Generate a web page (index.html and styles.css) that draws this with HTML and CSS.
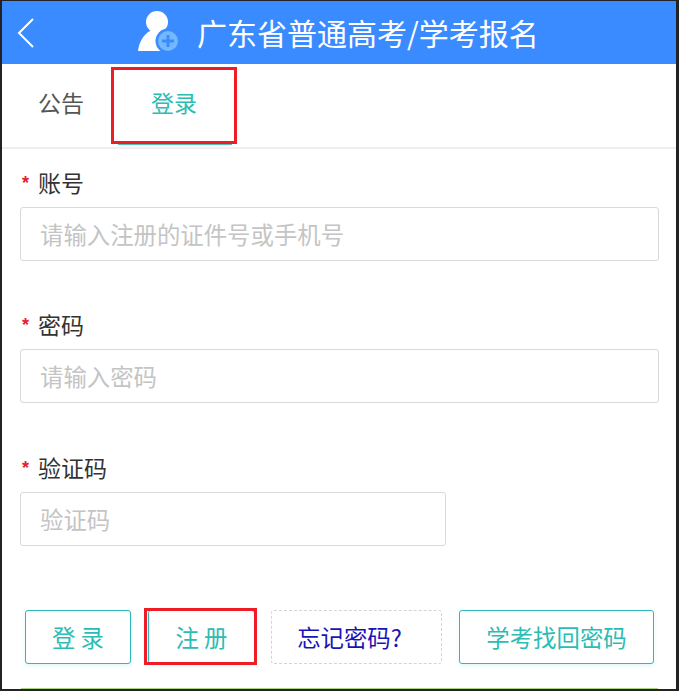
FILE: index.html
```html
<!DOCTYPE html>
<html lang="zh-CN">
<head>
    <meta charset="UTF-8">
    <meta name="viewport" content="width=device-width, initial-scale=1.0">
    <title>广东省普通高考/学考报名</title>
    <link rel="stylesheet" href="styles.css">
</head>
<body>
<div class="screen">
    <header class="topbar">
        <svg class="back" width="18" height="30" viewBox="0 0 18 30">
            <path d="M16 1 L2 15 L16 29" fill="none" stroke="#fff" stroke-width="2"/>
        </svg>
        <svg class="logo" width="42" height="42" viewBox="0 0 42 42">
            <circle cx="19" cy="12" r="11" fill="#fff"/>
            <path d="M0 41 C1 32 6 24 12 21 L26 21 C20 27 18 35 24 41 Z" fill="#fff"/>
            <circle cx="30" cy="31" r="12.5" fill="#3a8bff"/>
            <circle cx="30" cy="31" r="10" fill="#72b8fa"/>
            <path d="M30 25 V37 M24 31 H36" stroke="#3a8bff" stroke-width="3"/>
        </svg>
        <h1 class="title">广东省普通高考/学考报名</h1>
    </header>

    <nav class="tabs">
        <a class="tab">公告</a>
        <a class="tab tab-active">登录<span class="mark mark-tab"></span></a>
    </nav>

    <form class="login" autocomplete="off">
        <div class="field">
            <label class="label" for="uname"><i>*</i>账号</label>
            <input class="input" type="text" id="uname" placeholder="请输入注册的证件号或手机号">
        </div>
        <div class="field">
            <label class="label" for="pass"><i>*</i>密码</label>
            <input class="input" type="password" id="pass" placeholder="请输入密码">
        </div>
        <div class="field">
            <label class="label" for="code"><i>*</i>验证码</label>
            <input class="input input-short" type="text" id="code" placeholder="验证码">
        </div>

        <div class="actions">
            <button class="btn btn-login" type="button">登 录</button>
            <button class="btn btn-reg" type="button">注 册<span class="mark mark-btn"></span></button>
            <button class="btn btn-forgot" type="button">忘记密码?</button>
            <button class="btn btn-find" type="button">学考找回密码</button>
        </div>
    </form>
    <div class="bottomline"></div>
</div>
</body>
</html>
```

FILE: styles.css
```css
html, body {
  margin: 0;
  height: 691px;
  overflow: hidden;
  background: #222;
}

body {
  padding: 1px 3px 0 2px;
  box-sizing: border-box;
  font-family: "Noto Sans CJK SC", "Noto Sans", sans-serif;
}

.screen {
  height: 688px;
  background: #fff;
  position: relative;
  display: flex;
  flex-direction: column;
}

.topbar {
  height: 63px;
  flex: none;
  background: #3a8bff;
  display: flex;
  align-items: center;
  padding-left: 15px;
}

.logo {
  margin-left: 103px;
  margin-bottom: 3px;
}

.title {
  margin: 0 0 0 17px;
  font-size: 30px;
  font-weight: 400;
  line-height: 63px;
  color: #fff;
  white-space: nowrap;
}

.tabs {
  height: 83px;
  flex: none;
  display: flex;
  border-bottom: 2px solid #eee;
}

.tab {
  position: relative;
  font-size: 23px;
  line-height: 76px;
  color: #555;
  padding: 0 18px;
  margin-left: 18px;
}

.tab-active {
  color: #2cbcb4;
  padding: 0 31px;
}

.tab-active::after {
  content: "";
  position: absolute;
  left: -2px;
  right: -4px;
  bottom: 2px;
  height: 2px;
  background: #4cc4c0;
}

.mark {
  position: absolute;
  z-index: 1;
  box-sizing: border-box;
  border: 3px solid #ee1c25;
}

.mark-tab {
  left: -9px;
  top: 3px;
  width: 126px;
  height: 77px;
}

.mark-btn {
  left: -5px;
  top: -3px;
  width: 113px;
  height: 57px;
}

.login {
  padding: 16.9px 17px 0 18px;
  flex: 1;
}

.field {
  height: 142.5px;
}

.label {
  display: block;
  height: 41px;
  font-size: 23px;
  line-height: 32px;
  color: #333;
}

.label i {
  display: inline-block;
  width: 18px;
  text-indent: 2px;
  color: #e5202e;
  font-size: 18px;
  font-weight: bold;
  font-style: normal;
  font-family: "Liberation Sans", sans-serif;
  vertical-align: 3px;
}

.input {
  display: block;
  width: 100%;
  height: 54px;
  box-sizing: border-box;
  border: 1px solid #d9d9d9;
  border-radius: 3px;
  padding: 0 19px;
  font-family: inherit;
  font-size: 23.4px;
  background: #fff;
}

.input::placeholder {
  color: #c4c4c4;
  opacity: 1;
}

.input-short {
  width: 426px;
}

.actions {
  display: flex;
  margin: 16.6px 0 0 5px;
}

.btn {
  position: relative;
  height: 54px;
  padding: 0;
  box-sizing: border-box;
  border: 1px solid #2cb8bc;
  border-radius: 3px;
  background: #fff;
  color: #2cbcb4;
  font-family: inherit;
  font-size: 23.4px;
  box-shadow: 0 2px 4px rgba(44, 184, 188, 0.12);
}

.btn-login {
  width: 106px;
}

.btn-reg {
  width: 107px;
  margin-left: 17px;
}

.btn-forgot {
  width: 171px;
  margin-left: 16px;
  padding-right: 14px;
  border: 1px dashed #d4d4d4;
  color: #1a13b8;
  box-shadow: none;
}

.btn-find {
  width: 195px;
  margin-left: 17px;
}

.bottomline {
  position: absolute;
  left: 19px;
  right: 18px;
  bottom: 0;
  height: 1px;
  background: #a6d67e;
}
```
